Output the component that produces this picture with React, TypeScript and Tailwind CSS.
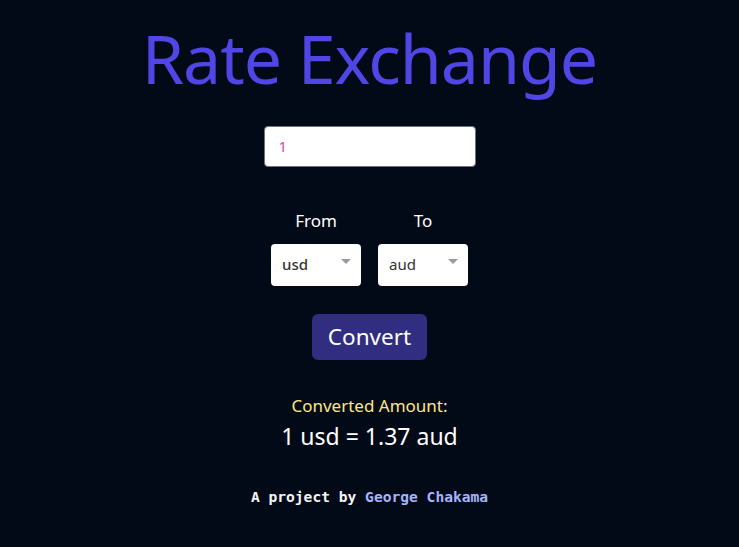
import React from "react";

function Caret() {
  return (
    <svg width="10" height="6" viewBox="0 0 10 6" className="shrink-0">
      <path d="M0 0 L10 0 L5 5 Z" fill="#9a9a9a" />
    </svg>
  );
}

export default function App() {
  return (
    <div
      className="min-h-[547px] w-full bg-[#030a17] flex flex-col items-center"
      style={{ fontFamily: '"Noto Sans", "Open Sans", sans-serif' }}
    >
      <h1 className="mt-[15px] text-[68px] leading-[86px] text-[#4f46e5] tracking-[-1px]">
        Rate Exchange
      </h1>
      <div className="mt-[25px] w-[212px] h-[41px] bg-white rounded border border-[#6b7280] flex items-center px-[14px]">
        <span className="text-[15px] text-[#ec4899]">1</span>
      </div>
      <div className="mt-[41px] flex gap-[17px]">
        <div className="flex flex-col items-center w-[90px]">
          <span className="text-white text-[17px] leading-[26px]">From</span>
          <div className="mt-[10px] w-[90px] h-[42px] bg-white rounded-sm flex items-center justify-between pl-[11px] pr-[10px] pb-[2px]">
            <span className="text-[15px] text-[#333] font-medium">usd</span>
            <div className="self-start mt-[15px]">
              <Caret />
            </div>
          </div>
        </div>
        <div className="flex flex-col items-center w-[90px]">
          <span className="text-white text-[17px] leading-[26px]">To</span>
          <div className="mt-[10px] w-[90px] h-[42px] bg-white rounded-sm flex items-center justify-between pl-[11px] pr-[10px] pb-[2px]">
            <span className="text-[15px] text-[#333]">aud</span>
            <div className="self-start mt-[15px]">
              <Caret />
            </div>
          </div>
        </div>
      </div>
      <button className="mt-[28px] w-[115px] h-[46px] bg-[#312e81] rounded-md text-white text-[22.5px] leading-none">
        Convert
      </button>
      <div className="mt-[35px] text-[#fde68a] text-[17px] leading-[22px]">
        Converted Amount:
      </div>
      <div className="mt-[4px] text-white text-[23px] leading-[30px]">
        1 usd = 1.37 aud
      </div>
      <div
        className="mt-[35px] text-[14.6px] font-bold text-[#f3f4f6]"
        style={{ fontFamily: '"DejaVu Sans Mono", monospace' }}
      >
        A project by <span className="text-[#a5b4fc]">George Chakama</span>
      </div>
    </div>
  );
}
